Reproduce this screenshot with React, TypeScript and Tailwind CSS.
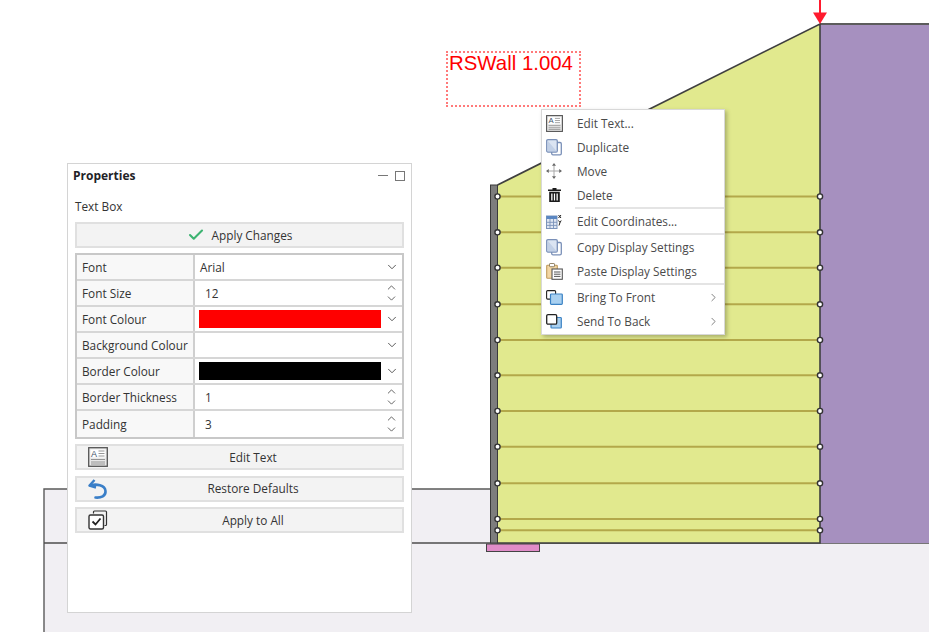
import React from 'react';
import { Check, ChevronDown, ChevronRight, ChevronUp } from 'lucide-react';

const FONT = "font-['Open_Sans','Noto_Sans',sans-serif]";

const ROW_YS = [196.5, 232.3, 267.7, 304.3, 340, 375.3, 411, 446.7, 483.3, 519, 530.3];

// the wall section drawing behind the panels
const Section = () => (
  <svg width="929" height="632" viewBox="0 0 929 632" className="block">
    <rect x="44" y="489" width="446" height="54" fill="#f1eff3" />
    <rect x="44" y="543" width="885" height="89" fill="#f1eff3" />
    <path d="M44 632V489H491" fill="none" stroke="#5a5a5a" strokeWidth="1.4" />
    <path d="M44 543H929" fill="none" stroke="#4d4d4d" strokeWidth="1.5" />
    <rect x="820" y="24" width="109" height="519" fill="#a690bf" />
    <path d="M929 24H820" stroke="#5c5c5c" strokeWidth="1.8" />
    <polygon points="497,185 820,24 820,543 497,543" fill="#e1e98e" />
    {ROW_YS.map((y) => (
      <line key={y} x1="497" x2="820" y1={y} y2={y} stroke="#b3a84a" strokeWidth="2" />
    ))}
    <rect x="490.500" y="185" width="7" height="358" fill="#7d7d7d" stroke="#3a3a3a" strokeWidth="1" />
    <path d="M497.500 185L820 24V543H497" fill="none" stroke="#3f3f3f" strokeWidth="1.600" />
    <rect x="486.500" y="544" width="53" height="7.500" fill="#e08cc8" stroke="#444444" strokeWidth="1" />
    {ROW_YS.map((y) => (
      <g key={y}>
        <circle cx="497.500" cy={y} r="2.600" fill="#ffffff" stroke="#333333" strokeWidth="1.400" />
        <circle cx="820" cy={y} r="2.600" fill="#ffffff" stroke="#333333" strokeWidth="1.400" />
      </g>
    ))}
    <line x1="820" y1="0" x2="820" y2="14" stroke="#ff1a2e" strokeWidth="2" />
    <polygon points="813,12.500 827,12.500 820,24" fill="#ff1a2e" />
  </svg>
);

const TextIcon = ({ size = 20 }: { size?: number }) => (
  <svg width={size} height={size} viewBox="0 0 20 20">
    <rect x="0.700" y="0.700" width="18.600" height="18.600" fill="#e8e8e8" stroke="#555555" strokeWidth="1.300" />
    <rect x="2.500" y="2.500" width="15" height="8" fill="#ffffff" />
    <text x="3" y="9.500" fontSize="9" fontFamily="Liberation Sans" fill="#44546a">A</text>
    <path d="M10.500 4h6M10.500 6.500h6M10.500 9h6M3 12.500h14M3 15h14M3 17h14" stroke="#8a8a8a" strokeWidth="0.900" />
  </svg>
);

const UndoIcon = () => (
  <svg width="20" height="22" viewBox="0 0 20 22">
    <path d="M6.500 2L1.500 7.500L8 9.500" fill="none" stroke="#3a7fc8" strokeWidth="2.400" strokeLinejoin="round" />
    <path d="M2.500 7.500C8 5.500 17 7 17.500 13C18 18 13 20 7.500 19.500" fill="none" stroke="#3a7fc8" strokeWidth="2.600" strokeLinecap="round" />
  </svg>
);

const ApplyAllIcon = () => (
  <svg width="20" height="20" viewBox="0 0 20 20">
    <path d="M5.500 3.500V2.200A1 1 0 0 1 6.500 1H17.500A1 1 0 0 1 18.500 2V14.500A1 1 0 0 1 17.500 15.500H16.500" fill="none" stroke="#333333" strokeWidth="1.200" />
    <rect x="1" y="5" width="14.500" height="14" rx="1.500" fill="#ffffff" stroke="#333333" strokeWidth="1.400" />
    <path d="M4.500 11.500L7.500 14.500L12.500 8.500" fill="none" stroke="#222222" strokeWidth="1.800" />
  </svg>
);

const CopyIcon = () => (
  <svg width="16" height="17" viewBox="0 0 16 17">
    <path d="M11 3.500H14A1.300 1.300 0 0 1 15.300 4.800V14.500A1.300 1.300 0 0 1 14 15.800H7A1.300 1.300 0 0 1 5.700 14.500V12" fill="#ffffff" stroke="#7a90b8" strokeWidth="1.300" />
    <rect x="0.700" y="0.700" width="10.600" height="12.300" rx="1.200" fill="#dbe4f2" stroke="#7a90b8" strokeWidth="1.300" />
    <path d="M1.500 1.500L10.800 12.500H1.500Z" fill="#c2d0e6" />
  </svg>
);

const MoveIcon = () => (
  <svg width="16" height="16" viewBox="0 0 16 16" fill="#666666">
    <path d="M8 2.500V13.500M2.500 8H13.500" stroke="#a8a8a8" strokeWidth="1" />
    <path d="M8 0L10 2.800H6ZM8 16L6 13.200H10ZM0 8L2.800 6V10ZM16 8L13.200 10V6Z" />
  </svg>
);

const TrashIcon = () => (
  <svg width="13" height="14" viewBox="0 0 13 14" fill="#1a1a1a">
    <path d="M4.500 0H8.500V1.500H13V3H0V1.500H4.500Z" />
    <path d="M1.200 3.800H11.800V14H1.200ZM3.200 5.500V12.500H4.500V5.500ZM5.900 5.500V12.500H7.100V5.500ZM8.500 5.500V12.500H9.800V5.500Z" fillRule="evenodd" />
  </svg>
);

const GridIcon = () => (
  <svg width="16" height="15" viewBox="0 0 16 15">
    <rect x="0.500" y="2" width="10.500" height="12.500" fill="#dfe6f2" stroke="#7b93ba" strokeWidth="1" />
    <rect x="0.500" y="2" width="10.500" height="3" fill="#5b87c2" />
    <path d="M0.500 8.300H11M0.500 11.400H11M4 5V14.500M7.500 5V14.500" stroke="#7b93ba" strokeWidth="0.900" />
    <path d="M12.500 1L15 4M15 1L12.500 4M12.500 6.500L14 8.500L15.200 6.500M14 8.500L13 11.500" fill="none" stroke="#222222" strokeWidth="1" />
  </svg>
);

const PasteIcon = () => (
  <svg width="17" height="17" viewBox="0 0 17 17">
    <rect x="0.700" y="2.200" width="10.600" height="13" rx="0.800" fill="#f3d6a4" stroke="#c09a5c" strokeWidth="1.100" />
    <rect x="3.500" y="0.500" width="5" height="3.200" rx="0.600" fill="#ffffff" stroke="#8a7a5c" strokeWidth="0.900" />
    <rect x="6" y="6" width="10.300" height="10.300" fill="#ffffff" stroke="#555555" strokeWidth="1.100" />
    <path d="M8 9H14.500M8 11.200H14.500M8 13.400H14.500" stroke="#555555" strokeWidth="1" />
  </svg>
);

const FrontIcon = () => (
  <svg width="17" height="15" viewBox="0 0 17 15">
    <rect x="0.600" y="0.600" width="9" height="8.500" rx="1" fill="#ffffff" stroke="#222222" strokeWidth="1.100" />
    <rect x="4.500" y="4" width="11.800" height="10.300" rx="0.800" fill="#a9d0f0" stroke="#3b82c4" strokeWidth="1.200" />
  </svg>
);

const BackIcon = () => (
  <svg width="16" height="15" viewBox="0 0 16 15">
    <rect x="5" y="3.500" width="10.300" height="10.500" rx="0.800" fill="#a9d0f0" stroke="#3b82c4" strokeWidth="1.200" />
    <rect x="0.700" y="0.700" width="10" height="9.500" rx="1.300" fill="#ffffff" stroke="#222222" strokeWidth="1.300" />
  </svg>
);

const SelectArrow = () => (
  <div className="ml-auto flex w-[21px] shrink-0 justify-center">
    <ChevronDown size={14} strokeWidth={1.500} color="#444444" />
  </div>
);

const SpinArrows = () => (
  <div className="ml-auto flex w-[21px] shrink-0 flex-col items-center">
    <ChevronUp size={13} strokeWidth={1.500} color="#444444" className="-mb-[2px]" />
    <ChevronDown size={13} strokeWidth={1.500} color="#444444" />
  </div>
);

const Row = ({ label, children, last }: { label: string; children: React.ReactNode; last?: boolean }) => (
  <div className={`flex h-[26px] shrink-0 ${last ? '' : 'border-b-2 border-[#d6d6d6]'}`}>
    <div className="flex w-[118px] shrink-0 items-center border-r-2 border-[#cfcfcf] bg-[#f8f8f8] pl-[5px] pt-[2px]">{label}</div>
    <div className="flex min-w-0 flex-1 items-center bg-white">{children}</div>
  </div>
);

const PanelButton = ({ icon, label }: { icon: React.ReactNode; label: string }) => (
  <div className="flex h-[26px] items-center border-2 border-[#e0e0e0] bg-[#f3f3f3] pl-[10px] pr-[5px]">
    <div className="flex w-[22px] shrink-0 justify-center">{icon}</div>
    <div className="flex-1 pt-[1px] text-center">{label}</div>
  </div>
);

const PropertiesPanel = () => (
  <div className={`absolute left-[67px] top-[163px] flex h-[450px] w-[345px] flex-col border border-[#d4d4d4] bg-white px-[7px] text-[11.800px] leading-none text-[#333333] ${FONT}`}>
    <div className="flex h-[23px] items-center">
      <span className="-ml-[2px] text-[12px] font-bold text-[#1f2328]">Properties</span>
      <div className="ml-auto mr-[-1px] flex items-center gap-[7px]">
        <div className="h-px w-[10px] bg-[#777777]" />
        <div className="h-[10px] w-[10px] border border-[#777777]" />
      </div>
    </div>
    <div className="flex h-[35px] items-center pt-[4px]">Text Box</div>
    <div className="flex h-[26px] items-center justify-center gap-[7px] border-2 border-[#e0e0e0] bg-[#f3f3f3]">
      <Check size={18} strokeWidth={2.800} color="#3cb371" />
      <span className="pt-[2px]">Apply Changes</span>
    </div>
    <div className="mt-[5px] flex h-[186px] flex-col border-2 border-[#c8c8c8]">
      <Row label="Font">
        <span className="pl-[5px] pt-[2px]">Arial</span>
        <SelectArrow />
      </Row>
      <Row label="Font Size">
        <span className="pl-[10px] pt-[2px]">12</span>
        <SpinArrows />
      </Row>
      <Row label="Font Colour">
        <div className="ml-[4px] h-[18px] flex-1 bg-[#ff0000]" />
        <SelectArrow />
      </Row>
      <Row label="Background Colour">
        <SelectArrow />
      </Row>
      <Row label="Border Colour">
        <div className="ml-[4px] h-[18px] flex-1 bg-black" />
        <SelectArrow />
      </Row>
      <Row label="Border Thickness">
        <span className="pl-[10px] pt-[2px]">1</span>
        <SpinArrows />
      </Row>
      <Row label="Padding" last>
        <span className="pl-[10px] pt-[2px]">3</span>
        <SpinArrows />
      </Row>
    </div>
    <div className="mt-[5px] flex flex-col gap-[5.500px]">
      <PanelButton icon={<TextIcon />} label="Edit Text" />
      <PanelButton icon={<UndoIcon />} label="Restore Defaults" />
      <PanelButton icon={<ApplyAllIcon />} label="Apply to All" />
    </div>
  </div>
);

const MenuItem = ({ icon, label, sub }: { icon: React.ReactNode; label: string; sub?: boolean }) => (
  <div className="flex h-6 items-center">
    <div className="flex w-[24px] shrink-0 justify-center">{icon}</div>
    <span className="ml-[11px] pt-[2px]">{label}</span>
    {sub && <ChevronRight size={13} strokeWidth={1.500} color="#666666" className="ml-auto mr-[4px]" />}
  </div>
);

const MenuSep = () => <div className="ml-[33px] h-[2px] bg-[#e4e4e4]" />;

const ContextMenu = () => (
  <div className={`absolute left-[541px] top-[109px] flex h-[226px] w-[184px] flex-col border border-[#d8d8d8] bg-white pt-[1px] text-[11.800px] leading-none text-[#4a4a4a] shadow-[2px_2px_4px_rgba(0,0,0,0.25)] ${FONT}`}>
    <MenuItem icon={<TextIcon size={17} />} label="Edit Text..." />
    <MenuItem icon={<CopyIcon />} label="Duplicate" />
    <MenuItem icon={<MoveIcon />} label="Move" />
    <MenuItem icon={<TrashIcon />} label="Delete" />
    <MenuSep />
    <MenuItem icon={<GridIcon />} label="Edit Coordinates..." />
    <MenuSep />
    <MenuItem icon={<CopyIcon />} label="Copy Display Settings" />
    <MenuItem icon={<PasteIcon />} label="Paste Display Settings" />
    <MenuSep />
    <MenuItem icon={<FrontIcon />} label="Bring To Front" sub />
    <MenuItem icon={<BackIcon />} label="Send To Back" sub />
  </div>
);

export default function App() {
  return (
    <div className="relative h-[632px] w-[929px] overflow-hidden bg-white">
      <Section />
      <div className="absolute left-[446px] top-[51px] h-[56px] w-[135px] border-2 border-dotted border-[#ff7a7a] pl-[1px] font-['Liberation_Sans',sans-serif] text-[20.400px] leading-[20px] text-[#ff0000]">
        RSWall 1.004
      </div>
      <PropertiesPanel />
      <ContextMenu />
    </div>
  );
}
